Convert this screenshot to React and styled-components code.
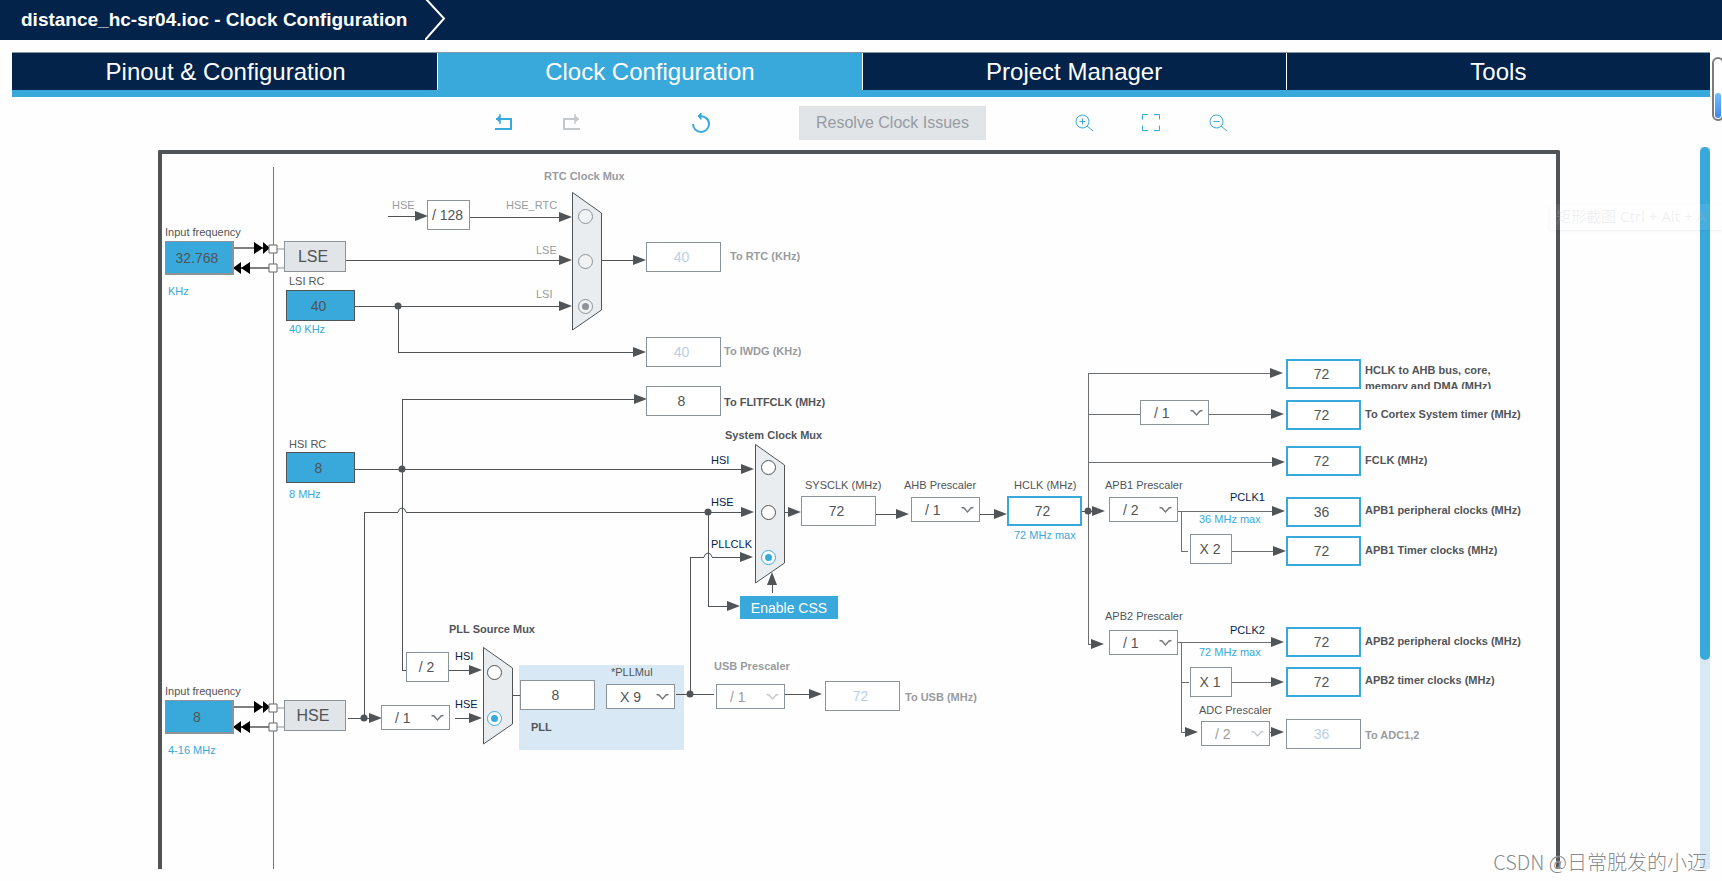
import React from 'react';
import styled, { createGlobalStyle, css } from 'styled-components';

const navy = '#03234b';
const blue = '#39a9dc';
const paleBlue = '#d9e8f5';
const dark = '#505456';
const grey = '#8c9399';
const faded = '#999c9e';

const GlobalStyle = createGlobalStyle`
  * { box-sizing: border-box; }
  body {
    margin: 0;
    background: #fefefe;
    color: ${dark};
    font-family: "Liberation Sans", Arial, "Noto Sans CJK SC", sans-serif;
  }
  button, input, select { font-family: inherit; margin: 0; }
`;

/* ---------- page shell ---------- */

const Page = styled.div`
  position: relative;
  display: flex;
  flex-direction: column;
  min-height: 100vh;
  padding-bottom: 12px;
  overflow: hidden;
`;

const Header = styled.header`
  display: flex;
  align-items: center;
  height: 40px;
  padding-left: 21px;
  background: ${navy};
`;

const Title = styled.h1`
  margin: 0 18px 0 0;
  color: #fff;
  font-size: 19px;
  line-height: 24px;
  font-weight: bold;
`;

const Tabs = styled.nav`
  display: flex;
  margin: 12px 12px 0;
  border-top: 1px solid #8496a6;
  border-bottom: 7px solid ${blue};
`;

const Tab = styled.button`
  flex: 1;
  height: 37px;
  padding: 0;
  border: 0;
  border-left: 1px solid #fff;
  background: ${p => (p.$active ? blue : navy)};
  color: #fff;
  font-size: 24px;
  line-height: 36px;
  &:first-child {
    border-left: 2px solid ${navy};
  }
`;

const Toolbar = styled.div`
  display: flex;
  align-items: center;
  justify-content: center;
  gap: 86px;
  height: 50px;
  padding-top: 2px;
`;

const ToolGroup = styled.div`
  display: flex;
  align-items: center;
  gap: ${p => p.$gap}px;
`;

const ToolButton = styled.button`
  display: flex;
  align-items: center;
  justify-content: center;
  width: 24px;
  height: 24px;
  padding: 0;
  border: 0;
  background: none;
  color: ${p => (p.disabled ? '#c6c9cb' : blue)};
`;

const ResolveButton = styled.button`
  width: 187px;
  height: 34px;
  padding: 0;
  border: 1px solid #dfe2e4;
  background: #e1e5e8;
  color: #959ca2;
  font-size: 16px;
`;

const Workspace = styled.main`
  display: flex;
  flex: 1;
  padding: 0 12px 0 18px;
`;

const BoardArea = styled.div`
  display: flex;
  flex: 1;
  justify-content: center;
  min-width: 0;
  padding-top: 3px;
  overflow: hidden;
`;

const ScrollTrack = styled.div`
  flex: none;
  width: 10px;
  background: ${paleBlue};
`;

const ScrollThumb = styled.div`
  height: 71%;
  border-radius: 5px;
  background: ${blue};
`;

/* ---------- clock tree canvas ---------- */

const Board = styled.section`
  position: relative;
  flex: none;
  width: 1418px;
  min-height: 719px;
  padding: 0 8px;
  overflow: hidden;
`;

const Frame = styled.div`
  height: 100%;
  border: 4px solid ${dark};
  border-bottom: 0;
  border-radius: 2px 2px 0 0;
`;

const Wires = styled.svg`
  position: absolute;
  left: 0;
  top: 0;
  width: 1418px;
  height: 100%;
  stroke: ${dark};
  fill: none;
`;

const at = css`
  position: absolute;
  left: ${p => p.$x}px;
  top: ${p => p.$y}px;
`;

const textTone = {
  dark: '#525558',
  navy,
  blue,
  faded,
};

const Caption = styled.label`
  ${at}
  height: 16px;
  font-size: 11px;
  line-height: 16px;
  white-space: nowrap;
  font-weight: ${p => (p.$bold ? 'bold' : 'normal')};
  color: ${p => textTone[p.$tone || 'dark']};
`;

const WrappedCaption = styled(Caption)`
  width: 150px;
  height: 27px;
  overflow: hidden;
  white-space: normal;
`;

const boxLook = {
  source: css`
    width: 69px;
    height: 34px;
    border: 1px solid ${grey};
    border-width: 1px 2px 2px 1px;
    background: ${blue};
  `,
  internal: css`
    width: 69px;
    height: 31px;
    border: 1px solid ${dark};
    background: ${blue};
  `,
  plain: css`
    width: 75px;
    height: 30px;
    border: 1px solid ${grey};
    background: #fff;
  `,
  bus: css`
    width: 75px;
    height: 30px;
    border: 2px solid ${blue};
    background: #fff;
  `,
};

const ValueBox = styled.input`
  ${at}
  padding: 0 4px 0 0;
  border-radius: 0;
  outline: 0;
  text-align: center;
  font-size: 14px;
  color: ${dark};
  ${p => boxLook[p.$look]}
  &:disabled { color: #b9cfe8; }
`;

const FactorBox = styled.div`
  ${at}
  width: ${p => p.$w}px;
  height: 30px;
  padding-right: 2px;
  border: 1px solid ${grey};
  background: #fff;
  text-align: center;
  font-size: 14px;
  line-height: 28px;
`;

const Oscillator = styled.button`
  ${at}
  width: 62px;
  height: 31px;
  padding: 0 4px 0 0;
  border: 1px solid ${grey};
  background: #e1e5e8;
  color: ${dark};
  font-size: 16px;
`;

const CssButton = styled.button`
  ${at}
  width: 98px;
  height: 23px;
  padding: 0;
  border: 0;
  background: ${blue};
  color: #fff;
  font-size: 14px;
`;

const SelectWrap = styled.div`
  ${at}
  display: flex;
  align-items: center;
  width: 69px;
  height: 25px;
  border: 1px solid ${grey};
  background: #fff;
  color: ${dark};
`;

const Select = styled.select`
  appearance: none;
  width: 67px;
  height: 23px;
  padding: 0 0 0 13px;
  border: 0;
  background: none;
  color: inherit;
  font-size: 14px;
  opacity: 1;
  &:disabled { color: ${faded}; }
`;

const Chevron = styled.svg`
  flex: none;
  width: 13px;
  height: 8px;
  margin-left: -18px;
  pointer-events: none;
  fill: none;
  stroke: ${p => (p.$off ? '#c6c9cb' : '#75797c')};
`;

const PllArea = styled.div`
  ${at}
  width: 165px;
  height: 85px;
  background: ${paleBlue};
`;

const MuxBody = styled.fieldset`
  ${at}
  display: flex;
  flex-direction: column;
  gap: ${p => p.$gap}px;
  width: 30px;
  height: ${p => p.$h}px;
  min-width: 0;
  margin: 0;
  padding: ${p => p.$pad}px 0 0 ${p => p.$inset}px;
  border: 0;
`;

const MuxShape = styled.svg`
  position: absolute;
  left: 0;
  top: 0;
  width: 30px;
  height: 100%;
  fill: #e9edf0;
  stroke: ${dark};
`;

const Radio = styled.input`
  position: relative;
  appearance: none;
  display: grid;
  place-items: center;
  flex: none;
  width: 15px;
  height: 15px;
  margin: 0;
  border: 1px solid ${dark};
  border-radius: 50%;
  background: #fff;
  &::before {
    content: '';
    width: 7px;
    height: 7px;
    border-radius: 50%;
  }
  &:checked { border-color: ${blue}; }
  &:checked::before { background: ${blue}; }
  &:disabled { border-color: ${grey}; background: #f1f2f4; }
  &:disabled:checked::before { background: ${grey}; }
`;

/* ---------- overlays ---------- */

const LevelMeter = styled.div`
  position: absolute;
  right: -2px;
  top: 57px;
  display: flex;
  align-items: flex-end;
  width: 12px;
  height: 64px;
  padding: 1px;
  border: 2px solid #7c7c7c;
  border-radius: 6px;
  background: #fff;
`;

const LevelFill = styled.div`
  width: 6px;
  height: 25px;
  border-radius: 3px;
  background: linear-gradient(#6cc0fb, #3f86f5);
`;

const Hint = styled.div`
  position: absolute;
  right: -2px;
  top: 204px;
  width: 174px;
  height: 26px;
  padding-left: 6px;
  background: rgba(255, 255, 255, 0.07);
  box-shadow: 0 1px 3px rgba(0, 0, 0, 0.05);
  color: rgba(190, 190, 190, 0.22);
  font-family: "Noto Sans", "Noto Sans CJK SC", sans-serif;
  font-size: 15px;
  line-height: 25px;
  white-space: nowrap;
`;

const Watermark = styled.div`
  position: absolute;
  right: 15px;
  bottom: 5px;
  color: rgba(120, 122, 126, 0.9);
  font-family: "Noto Sans CJK SC", sans-serif;
  font-weight: 300;
  font-size: 20px;
  line-height: 28px;
  text-shadow: 0 0 1px #fff;
`;

/* ---------- pieces of the tree ---------- */

const rotation = { right: 0, down: 90, left: 180, up: 270 };

function Arrow({ x, y, dir = 'right' }) {
  return (
    <path
      d="M-13 -5 L0 0 L-13 5 Z"
      transform={`translate(${x} ${y}) rotate(${rotation[dir]})`}
      fill={dark}
      stroke="none"
    />
  );
}

function PinArrows({ y }) {
  return (
    <g>
      <path d={`M84 ${y}H119M84 ${y + 20}H119`} stroke="#000" />
      <path
        d={`M104 ${y - 6}L113 ${y}L104 ${y + 6}ZM113 ${y - 6}L120 ${y}L113 ${y + 6}Z`}
        fill="#000"
        stroke="none"
      />
      <path
        d={`M100 ${y + 14}L91 ${y + 20}L100 ${y + 26}ZM91 ${y + 14}L83 ${y + 20}L91 ${y + 26}Z`}
        fill="#000"
        stroke="none"
      />
      <path d={`M127 ${y + 1}H134M127 ${y + 20}H134`} stroke={grey} />
      <path d={`M119 ${y - 3}h8v8h-8ZM119 ${y + 16}h8v8h-8Z`} fill="#fff" stroke="#606466" />
    </g>
  );
}

const arrows = [
  [278, 66], [422, 67], [422, 110], [422, 156], [496, 110], [496, 202], [497, 249],
  [604, 319], [604, 362], [603, 407], [590, 456], [651, 362], [759, 364], [857, 364],
  [955, 361], [954, 494], [1133, 223], [1134, 264], [1135, 312], [1135, 361],
  [1136, 401], [1134, 492], [1134, 532], [1134, 582], [1048, 582],
  [332, 520], [332, 568], [232, 568], [672, 544],
];

const junctions = [[248, 156], [252, 319], [558, 362], [214, 568], [540, 544], [938, 361]];

function TreeWires() {
  return (
    <Wires aria-hidden="true">
      <path d="M123 17V719" stroke="#74787b" shapeRendering="crispEdges" />
      <g shapeRendering="crispEdges">
        <path d="M238 66H266M320 67H410M196 110H410M205 156H410M451 110H484" />
        <path d="M248 156V202H484" />
        <path d="M205 319H592M486 249H252V520H256M299 520H320" />
        <path d="M214 568V362H248M256 362H592M198 568H224M305 568H320" />
        <path d="M558 362V456H578M540 544V407H554M562 407H592" />
        <path d="M634 362H640M726 364H746M830 364H846M932 361H944" />
        <path d="M1122 223H938V494H942M938 264H990M1059 264H1122M938 312H1122" stroke="#6c7072" />
        <path d="M1027 361H1122M1031 361V401H1038M1082 401H1124" stroke="#6c7072" />
        <path d="M1028 492H1122M1031 492V582H1036M1031 532H1039M1082 532H1122M1120 582H1122" stroke="#6c7072" />
        <path d="M362 545H370M526 544H564M635 544H660M622 443V434" />
      </g>
      <path d="M248 362Q249 358 252 358T256 362M554 407Q555 403 558 403T562 407" />
      {arrows.map(([x, y]) => <Arrow key={`${x}-${y}`} x={x} y={y} />)}
      <Arrow x={622} y={422} dir="up" />
      {junctions.map(([x, y]) => (
        <circle key={`${x}-${y}`} cx={x} cy={y} r="3.5" fill={dark} stroke="none" />
      ))}
      <PinArrows y={98} />
      <PinArrows y={557} />
    </Wires>
  );
}

function Mux({ x, y, h, slope, gap, pad, inset = 6, name, options, selected, disabled }) {
  return (
    <MuxBody $x={x} $y={y} $h={h} $gap={gap} $pad={pad} $inset={inset} disabled={disabled} aria-label={name}>
      <MuxShape aria-hidden="true">
        <path d={`M.5 .5L29.5 ${slope}V${h - slope}L.5 ${h - 1}Z`} />
      </MuxShape>
      {options.map(o => (
        <Radio
          key={o}
          type="radio"
          id={`${name}-${o}`}
          name={name}
          aria-label={o}
          defaultChecked={o === selected}
        />
      ))}
    </MuxBody>
  );
}

function Prescaler({ x, y, id, label, value, disabled }) {
  return (
    <SelectWrap $x={x} $y={y}>
      <Select id={id} aria-label={label} disabled={disabled} defaultValue={value}>
        <option>{value}</option>
      </Select>
      <Chevron $off={disabled} viewBox="0 0 13 8" aria-hidden="true">
        <path d="M.5 1.5L3 2L6.5 6L10 2L12.5 1.5" strokeWidth="1.4" />
      </Chevron>
    </SelectWrap>
  );
}

const captions = [
  { x: 15, y: 74, text: 'Input frequency', forId: 'lse-in' },
  { x: 18, y: 133, text: 'KHz', tone: 'blue' },
  { x: 139, y: 123, text: 'LSI RC', forId: 'lsi' },
  { x: 139, y: 171, text: '40 KHz', tone: 'blue' },
  { x: 242, y: 47, text: 'HSE', tone: 'faded' },
  { x: 356, y: 47, text: 'HSE_RTC', tone: 'faded', forId: 'rtc-mux-HSE_RTC' },
  { x: 386, y: 92, text: 'LSE', tone: 'faded', forId: 'rtc-mux-LSE' },
  { x: 386, y: 136, text: 'LSI', tone: 'faded', forId: 'rtc-mux-LSI' },
  { x: 394, y: 18, text: 'RTC Clock Mux', tone: 'faded', bold: true },
  { x: 580, y: 98, text: 'To RTC (KHz)', tone: 'faded', bold: true, forId: 'rtc' },
  { x: 574, y: 193, text: 'To IWDG (KHz)', tone: 'faded', bold: true, forId: 'iwdg' },
  { x: 574, y: 244, text: 'To FLITFCLK (MHz)', bold: true, forId: 'flitf' },
  { x: 575, y: 277, text: 'System Clock Mux', bold: true },
  { x: 139, y: 286, text: 'HSI RC', forId: 'hsi' },
  { x: 139, y: 336, text: '8 MHz', tone: 'blue' },
  { x: 561, y: 302, text: 'HSI', tone: 'navy', forId: 'system-mux-HSI' },
  { x: 561, y: 344, text: 'HSE', tone: 'navy', forId: 'system-mux-HSE' },
  { x: 561, y: 386, text: 'PLLCLK', tone: 'navy', forId: 'system-mux-PLLCLK' },
  { x: 655, y: 327, text: 'SYSCLK (MHz)', forId: 'sysclk' },
  { x: 754, y: 327, text: 'AHB Prescaler', forId: 'ahb' },
  { x: 864, y: 327, text: 'HCLK (MHz)', forId: 'hclk' },
  { x: 864, y: 377, text: '72 MHz max', tone: 'blue' },
  { x: 299, y: 471, text: 'PLL Source Mux', bold: true },
  { x: 305, y: 498, text: 'HSI', tone: 'navy', forId: 'pll-mux-HSI' },
  { x: 305, y: 546, text: 'HSE', tone: 'navy', forId: 'pll-mux-HSE' },
  { x: 15, y: 533, text: 'Input frequency', forId: 'hse-in' },
  { x: 18, y: 592, text: '4-16 MHz', tone: 'blue' },
  { x: 461, y: 514, text: '*PLLMul', forId: 'pllmul' },
  { x: 381, y: 569, text: 'PLL', bold: true, forId: 'pll' },
  { x: 564, y: 508, text: 'USB Prescaler', tone: 'faded', bold: true, forId: 'usb-div' },
  { x: 755, y: 539, text: 'To USB (MHz)', tone: 'faded', bold: true, forId: 'usb' },
  { x: 955, y: 327, text: 'APB1 Prescaler', forId: 'apb1' },
  { x: 1080, y: 339, text: 'PCLK1', tone: 'navy' },
  { x: 1049, y: 361, text: '36 MHz max', tone: 'blue' },
  { x: 955, y: 458, text: 'APB2 Prescaler', forId: 'apb2' },
  { x: 1080, y: 472, text: 'PCLK2', tone: 'navy' },
  { x: 1049, y: 494, text: '72 MHz max', tone: 'blue' },
  { x: 1049, y: 552, text: 'ADC Prescaler', forId: 'adc-div' },
  { x: 1215, y: 256, text: 'To Cortex System timer (MHz)', bold: true, forId: 'cortex' },
  { x: 1215, y: 302, text: 'FCLK (MHz)', bold: true, forId: 'fclk' },
  { x: 1215, y: 352, text: 'APB1 peripheral clocks (MHz)', bold: true, forId: 'apb1-per' },
  { x: 1215, y: 392, text: 'APB1 Timer clocks (MHz)', bold: true, forId: 'apb1-tim' },
  { x: 1215, y: 483, text: 'APB2 peripheral clocks (MHz)', bold: true, forId: 'apb2-per' },
  { x: 1215, y: 522, text: 'APB2 timer clocks (MHz)', bold: true, forId: 'apb2-tim' },
  { x: 1215, y: 577, text: 'To ADC1,2', tone: 'faded', bold: true, forId: 'adc' },
];

const values = [
  { id: 'lse-in', x: 15, y: 91, look: 'source', value: '32.768' },
  { id: 'lsi', x: 136, y: 140, look: 'internal', value: '40', fixed: true },
  { id: 'hsi', x: 136, y: 302, look: 'internal', value: '8', fixed: true },
  { id: 'hse-in', x: 15, y: 550, look: 'source', value: '8' },
  { id: 'rtc', x: 496, y: 92, look: 'plain', value: '40', disabled: true },
  { id: 'iwdg', x: 496, y: 187, look: 'plain', value: '40', disabled: true },
  { id: 'flitf', x: 496, y: 236, look: 'plain', value: '8' },
  { id: 'sysclk', x: 651, y: 346, look: 'plain', value: '72' },
  { id: 'hclk', x: 857, y: 346, look: 'bus', value: '72' },
  { id: 'pll', x: 370, y: 530, look: 'plain', value: '8' },
  { id: 'usb', x: 675, y: 531, look: 'plain', value: '72', disabled: true },
  { id: 'ahb-out', x: 1136, y: 209, look: 'bus', value: '72' },
  { id: 'cortex', x: 1136, y: 250, look: 'bus', value: '72' },
  { id: 'fclk', x: 1136, y: 296, look: 'bus', value: '72' },
  { id: 'apb1-per', x: 1136, y: 347, look: 'bus', value: '36' },
  { id: 'apb1-tim', x: 1136, y: 386, look: 'bus', value: '72' },
  { id: 'apb2-per', x: 1136, y: 477, look: 'bus', value: '72' },
  { id: 'apb2-tim', x: 1136, y: 517, look: 'bus', value: '72' },
  { id: 'adc', x: 1136, y: 569, look: 'plain', value: '36', disabled: true },
];

const prescalers = [
  { id: 'hse-div', x: 231, y: 555, value: '/ 1', label: 'HSE divider' },
  { id: 'pllmul', x: 456, y: 534, value: 'X 9' },
  { id: 'usb-div', x: 566, y: 534, value: '/ 1', disabled: true },
  { id: 'ahb', x: 761, y: 347, value: '/ 1' },
  { id: 'cortex-div', x: 990, y: 250, value: '/ 1', label: 'Cortex prescaler' },
  { id: 'apb1', x: 959, y: 347, value: '/ 2' },
  { id: 'apb2', x: 959, y: 480, value: '/ 1' },
  { id: 'adc-div', x: 1051, y: 571, value: '/ 2', disabled: true },
];

const factors = [
  { x: 277, y: 50, w: 43, text: '/ 128' },
  { x: 256, y: 502, w: 43, text: '/ 2' },
  { x: 1040, y: 384, w: 42, text: 'X 2' },
  { x: 1040, y: 517, w: 42, text: 'X 1' },
];

function ClockTree() {
  return (
    <Board aria-label="Clock tree">
      <Frame />
      <PllArea $x={369} $y={515} />
      <TreeWires />
      <Mux x={422} y={42} h={139} slope={21} gap={30} pad={17} name="rtc-mux"
        options={['HSE_RTC', 'LSE', 'LSI']} selected="LSI" disabled />
      <Mux x={605} y={294} h={140} slope={21} gap={30} pad={16} name="system-mux"
        options={['HSI', 'HSE', 'PLLCLK']} selected="PLLCLK" />
      <Mux x={333} y={497} h={98} slope={21} gap={31} pad={18} inset={4} name="pll-mux"
        options={['HSI', 'HSE']} selected="HSE" />
      {captions.map(c => (
        <Caption
          key={`${c.x}-${c.y}`}
          as={c.forId ? 'label' : 'span'}
          htmlFor={c.forId}
          $x={c.x}
          $y={c.y}
          $tone={c.tone}
          $bold={c.bold}
        >
          {c.text}
        </Caption>
      ))}
      <WrappedCaption htmlFor="ahb-out" $x={1215} $y={212} $bold>
        HCLK to AHB bus, core, memory and DMA (MHz)
      </WrappedCaption>
      {values.map(v => (
        <ValueBox
          key={v.id}
          id={v.id}
          type="text"
          $x={v.x}
          $y={v.y}
          $look={v.look}
          disabled={v.disabled}
          readOnly={v.fixed}
          defaultValue={v.value}
        />
      ))}
      {prescalers.map(p => <Prescaler key={p.id} {...p} />)}
      {factors.map(f => (
        <FactorBox key={`${f.x}-${f.y}`} $x={f.x} $y={f.y} $w={f.w}>{f.text}</FactorBox>
      ))}
      <Oscillator $x={134} $y={91}>LSE</Oscillator>
      <Oscillator $x={134} $y={550}>HSE</Oscillator>
      <CssButton $x={590} $y={446}>Enable CSS</CssButton>
    </Board>
  );
}

/* ---------- toolbar icons ---------- */

function Icon({ children, width = 1 }) {
  return (
    <svg width="20" height="20" viewBox="0 0 20 20" fill="none" stroke="currentColor" strokeWidth={width} aria-hidden="true">
      {children}
    </svg>
  );
}

const tabs = ['Pinout & Configuration', 'Clock Configuration', 'Project Manager', 'Tools'];

export default function App() {
  return (
    <Page>
      <GlobalStyle />
      <Header>
        <Title>distance_hc-sr04.ioc - Clock Configuration</Title>
        <svg width="22" height="40" viewBox="0 0 22 40" fill="none" stroke="#fff" strokeWidth="2" aria-hidden="true">
          <path d="M1 -1L19 18.500L0 40" />
        </svg>
      </Header>
      <Tabs>
        {tabs.map((t, i) => <Tab key={t} $active={i === 1}>{t}</Tab>)}
      </Tabs>
      <Toolbar>
        <ToolGroup $gap={106}>
          <ToolGroup $gap={43}>
            <ToolButton aria-label="Undo">
              <Icon width={2}>
                <path d="M2 6H17V16H1" />
                <path d="M6 1V11M6 3L3 6L6 9" strokeWidth="1.500" />
              </Icon>
            </ToolButton>
            <ToolButton aria-label="Redo" disabled>
              <Icon width={2}>
                <path d="M18 6H3V16H19" />
                <path d="M14 1V11M14 3L17 6L14 9" strokeWidth="1.500" />
              </Icon>
            </ToolButton>
          </ToolGroup>
          <ToolButton aria-label="Reset">
            <Icon width={2}>
              <path d="M8 3.500C13 2.500 18 5.500 18 11A8 8 0 0 1 2 11" />
              <path d="M10 0L7 3L10 6.500Z" fill="currentColor" strokeWidth="1" />
            </Icon>
          </ToolButton>
        </ToolGroup>
        <ResolveButton disabled>Resolve Clock Issues</ResolveButton>
        <ToolGroup $gap={43}>
          <ToolButton aria-label="Zoom in">
            <Icon>
              <circle cx="8.500" cy="8.500" r="6.500" />
              <path d="M13 13L19 18M5.500 8.500H11.500M8.500 5.500V11.500" />
            </Icon>
          </ToolButton>
          <ToolButton aria-label="Fit to window">
            <Icon>
              <path d="M1.500 6.500V1.500H7M13 1.500H18.500V6.500M18.500 12.500V17.500H13M7 17.500H1.500V12.500" />
            </Icon>
          </ToolButton>
          <ToolButton aria-label="Zoom out">
            <Icon>
              <circle cx="8.500" cy="8.500" r="6.500" />
              <path d="M13 13L19 18M5.500 8.500H11.500" />
            </Icon>
          </ToolButton>
        </ToolGroup>
      </Toolbar>
      <Workspace>
        <BoardArea>
          <ClockTree />
        </BoardArea>
        <ScrollTrack><ScrollThumb /></ScrollTrack>
      </Workspace>
      <LevelMeter><LevelFill /></LevelMeter>
      <Hint>矩形截图 Ctrl + Alt + A</Hint>
      <Watermark>CSDN @日常脱发的小迈</Watermark>
    </Page>
  );
}
